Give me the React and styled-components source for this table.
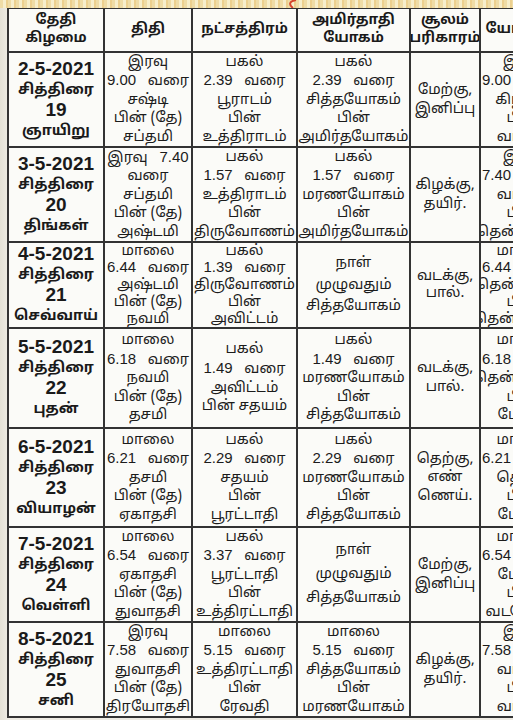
import React from 'react';
import styled, { createGlobalStyle } from 'styled-components';

const Global = createGlobalStyle`
  html, body { margin: 0; padding: 0; }
  body {
    width: 513px;
    height: 720px;
    overflow: hidden;
    background: #ebe8de;
  }
`;

const TAMIL = `"Noto Sans Tamil", "Lohit Tamil", "Noto Sans", "Liberation Sans", sans-serif`;

const Page = styled.div`
  width: 513px;
  height: 720px;
  overflow: hidden;
  display: flex;
  flex-direction: column;
`;

const TopStrip = styled.div`
  position: relative;
  height: 8px;
  flex: none;
  background:
    repeating-linear-gradient(90deg, #efdca6 0 3px, #f7eecb 3px 6px, #ecd08f 6px 8px);
`;

const Curl = styled.svg`
  position: absolute;
  left: 284px;
  top: 0;
`;

const Body = styled.div`
  flex: 1;
  display: flex;
  padding-left: 8px;
  background: linear-gradient(90deg, #e4e1d6 0, #eeebe3 8px);
  min-height: 0;
`;

const Grid = styled.div`
  display: grid;
  grid-template-columns: 94px 86px 103px 111px 68px 84px;
  grid-template-rows: 42px 93px 93px 84px 98px 97px 93px 93px;
  background: #333333;
  gap: 2px;
  padding: 2px;
  margin-left: -1px;
  margin-top: -1px;
  align-self: flex-start;
`;

const Cell = styled.div`
  background: #fbfbf8;
  display: flex;
  flex-direction: column;
  align-items: center;
  justify-content: ${p => (p.$spread ? 'space-evenly' : 'center')};
  padding: ${p => (p.$spread ? '8px 2px' : '0 2px')};
  overflow: hidden;
  font-family: ${TAMIL};
  color: #1c1c1c;
  font-size: 14.5px;
  line-height: ${p => (p.$tight ? '16.8px' : '18.6px')};
  text-align: center;
  white-space: nowrap;
`;

const HeadCell = styled(Cell)`
  font-weight: 700;
  font-size: 14px;
  line-height: 18px;
  color: #1a1a1a;
`;

const DateCell = styled(Cell)`
  font-weight: 700;
  line-height: 19px;
  color: #1a1a1a;
`;

const DateText = styled.span`
  font-family: "Liberation Sans", Arial, sans-serif;
  font-size: 19px;
  font-weight: 700;
`;

const Line = styled.span`
  display: block;
  word-spacing: ${p => (p.$wide ? '8px' : '0')};
`;

const Num = styled.span`
  font-family: "Liberation Sans", Arial, sans-serif;
  font-size: 15px;
`;

const headers = [
  ['தேதி', 'கிழமை'],
  ['திதி'],
  ['நட்சத்திரம்'],
  ['அமிர்தாதி', 'யோகம்'],
  ['சூலம்', 'பரிகாரம்'],
  ['யோகினி'],
];

const rows = [
  {
    date: '2-5-2021', month: 'சித்திரை', day: '19', wd: 'ஞாயிறு',
    thithi: ['இரவு', '9.00 வரை', 'சஷ்டி', 'பின் (தே)', 'சப்தமி'],
    star: ['பகல்', '2.39 வரை', 'பூராடம்', 'பின்', 'உத்திராடம்'],
    yogam: ['பகல்', '2.39 வரை', 'சித்தயோகம்', 'பின்', 'அமிர்தயோகம்'],
    soolam: ['மேற்கு,', 'இனிப்பு'],
    yogini: ['இரவு', '9.00 வரை', 'கிழக்கு', 'பின்', 'வடக்கு'],
  },
  {
    date: '3-5-2021', month: 'சித்திரை', day: '20', wd: 'திங்கள்',
    thithi: ['இரவு 7.40', 'வரை', 'சப்தமி', 'பின் (தே)', 'அஷ்டமி'],
    star: ['பகல்', '1.57 வரை', 'உத்திராடம்', 'பின்', 'திருவோணம்'],
    yogam: ['பகல்', '1.57 வரை', 'மரணயோகம்', 'பின்', 'அமிர்தயோகம்'],
    soolam: ['கிழக்கு,', 'தயிர்.'],
    yogini: ['இரவு', '7.40 வரை', 'வடக்கு', 'பின்', 'தென்மேற்கு'],
  },
  {
    date: '4-5-2021', month: 'சித்திரை', day: '21', wd: 'செவ்வாய்', tight: true,
    thithi: ['மாலை', '6.44 வரை', 'அஷ்டமி', 'பின் (தே)', 'நவமி'],
    star: ['பகல்', '1.39 வரை', 'திருவோணம்', 'பின்', 'அவிட்டம்'],
    yogam: ['நாள்', 'முழுவதும்', 'சித்தயோகம்'], spread: true,
    soolam: ['வடக்கு,', 'பால்.'],
    yogini: ['மாலை', '6.44 வரை', 'தென்மேற்கு', 'பின்', 'தென்கிழக்கு'],
  },
  {
    date: '5-5-2021', month: 'சித்திரை', day: '22', wd: 'புதன்',
    thithi: ['மாலை', '6.18 வரை', 'நவமி', 'பின் (தே)', 'தசமி'],
    star: ['பகல்', '1.49 வரை', 'அவிட்டம்', 'பின் சதயம்'],
    yogam: ['பகல்', '1.49 வரை', 'மரணயோகம்', 'பின்', 'சித்தயோகம்'],
    soolam: ['வடக்கு,', 'பால்.'],
    yogini: ['மாலை', '6.18 வரை', 'தென்கிழக்கு', 'பின்', 'மேற்கு'],
  },
  {
    date: '6-5-2021', month: 'சித்திரை', day: '23', wd: 'வியாழன்',
    thithi: ['மாலை', '6.21 வரை', 'தசமி', 'பின் (தே)', 'ஏகாதசி'],
    star: ['பகல்', '2.29 வரை', 'சதயம்', 'பின்', 'பூரட்டாதி'],
    yogam: ['பகல்', '2.29 வரை', 'மரணயோகம்', 'பின்', 'சித்தயோகம்'],
    soolam: ['தெற்கு,', 'எண்', 'ணெய்.'],
    yogini: ['மாலை', '6.21 வரை', 'தெற்கு', 'பின்', 'மேற்கு'],
  },
  {
    date: '7-5-2021', month: 'சித்திரை', day: '24', wd: 'வெள்ளி',
    thithi: ['மாலை', '6.54 வரை', 'ஏகாதசி', 'பின் (தே)', 'துவாதசி'],
    star: ['பகல்', '3.37 வரை', 'பூரட்டாதி', 'பின்', 'உத்திரட்டாதி'],
    yogam: ['நாள்', 'முழுவதும்', 'சித்தயோகம்'], spread: true,
    soolam: ['மேற்கு,', 'இனிப்பு'],
    yogini: ['மாலை', '6.54 வரை', 'மேற்கு', 'பின்', 'வடமேற்கு'],
  },
  {
    date: '8-5-2021', month: 'சித்திரை', day: '25', wd: 'சனி',
    thithi: ['இரவு', '7.58 வரை', 'துவாதசி', 'பின் (தே)', 'திரயோதசி'],
    star: ['மாலை', '5.15 வரை', 'உத்திரட்டாதி', 'பின்', 'ரேவதி'],
    yogam: ['மாலை', '5.15 வரை', 'சித்தயோகம்', 'பின்', 'மரணயோகம்'],
    soolam: ['கிழக்கு,', 'தயிர்.'],
    yogini: ['இரவு', '7.58 வரை', 'வடக்கு', 'பின்', 'வடக்கு'],
  },
];

function renderLine(text) {
  const parts = text.split(/(\d[\d.]*)/);
  return parts.map((p, i) =>
    /^\d/.test(p) ? <Num key={i}>{p}</Num> : <React.Fragment key={i}>{p}</React.Fragment>
  );
}

function Lines({ items }) {
  return items.map((t, i) => (
    <Line key={i} $wide={/\d/.test(t)}>
      {renderLine(t)}
    </Line>
  ));
}

export default function App() {
  return (
    <>
      <Global />
      <Page>
        <TopStrip>
          <Curl width="16" height="8" viewBox="0 0 16 8">
            <path d="M12 0 C6 1 4 4 9 8" stroke="#d6452c" strokeWidth="2" fill="none" />
          </Curl>
        </TopStrip>
        <Body>
          <Grid>
            {headers.map((h, i) => (
              <HeadCell key={'h' + i}>
                {h.map((t, j) => (
                  <Line key={j}>{t}</Line>
                ))}
              </HeadCell>
            ))}
            {rows.map((r, i) => (
              <React.Fragment key={i}>
                <DateCell>
                  <Line><DateText>{r.date}</DateText></Line>
                  <Line>{r.month}</Line>
                  <Line><DateText>{r.day}</DateText></Line>
                  <Line>{r.wd}</Line>
                </DateCell>
                <Cell $tight={r.tight}><Lines items={r.thithi} /></Cell>
                <Cell $tight={r.tight}><Lines items={r.star} /></Cell>
                <Cell $spread={r.spread} $tight={r.tight}><Lines items={r.yogam} /></Cell>
                <Cell $tight={r.tight}><Lines items={r.soolam} /></Cell>
                <Cell $tight={r.tight}><Lines items={r.yogini} /></Cell>
              </React.Fragment>
            ))}
          </Grid>
        </Body>
      </Page>
    </>
  );
}
